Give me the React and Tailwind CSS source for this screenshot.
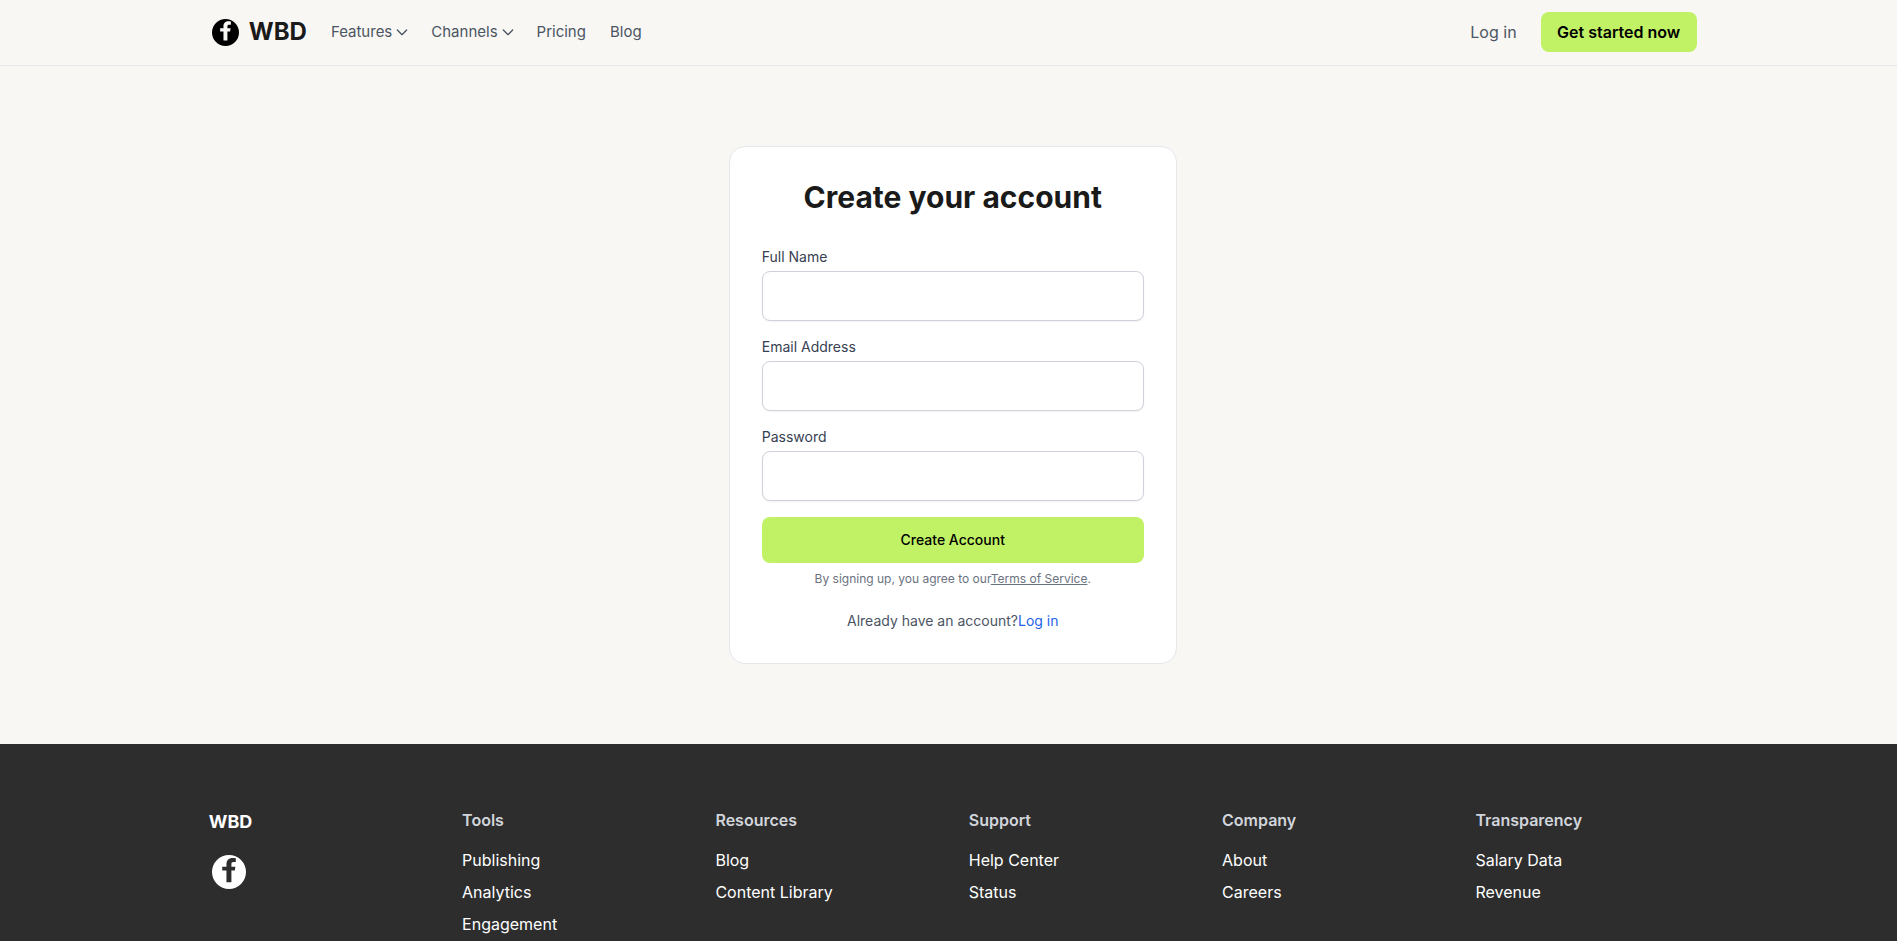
const LIME = 'bg-[#c1f266]';

// round mark with the f cut out, so the page colour shows through it
function FacebookIcon({ className }) {
  return (
    <svg viewBox="0 0 24 24" fill="currentColor" fillRule="evenodd" className={className}>
      <path d="M12 0a12 12 0 1 0 0 24a12 12 0 1 0 0-24Z M10.2 19.2V11H7.2V8.3H10.2V6.6C10.2 3.5 12 2.1 14.5 2.1C15.4 2.1 16.2 2.2 16.8 2.3V5H15.2C14.1 5 13.7 5.5 13.7 6.6V8.3H16.5L16.1 11H13.7V19.2Z" />
    </svg>
  );
}

function Chevron() {
  return (
    <svg viewBox="0 0 24 24" fill="none" stroke="currentColor" strokeWidth="2" strokeLinecap="round" strokeLinejoin="round" className="w-4 h-4 ml-[2px] -mr-[3px]">
      <path d="M19 9l-7 7-7-7" />
    </svg>
  );
}

const footerColumns = [
  { title: 'Tools', links: ['Publishing', 'Analytics', 'Engagement'] },
  { title: 'Resources', links: ['Blog', 'Content Library'] },
  { title: 'Support', links: ['Help Center', 'Status'] },
  { title: 'Company', links: ['About', 'Careers'] },
  { title: 'Transparency', links: ['Salary Data', 'Revenue'] },
];

function Field({ label, type = 'text' }) {
  return (
    <div className="mb-4">
      <label className="block mb-1 text-sm text-[#374151]">{label}</label>
      <input type={type} className="block w-full h-[50px] bg-white border border-[#cfd1da] rounded-lg shadow-xs" />
    </div>
  );
}

export default function App() {
  return (
    <div className="h-screen overflow-hidden">
      <div className="w-[1905.5px] bg-[#f8f7f4] text-[#1a1a1a] font-['Inter',sans-serif]">
        {/* Nav */}
        <header className="border-b border-[#e5e7eb]">
          <div className="max-w-[1536px] mx-auto px-6 pt-3 pb-[13px] flex items-center justify-between">
            <div className="flex items-center">
              <a className="flex items-center gap-[10px] pl-[3px]">
                <FacebookIcon className="w-[27px] h-[27px] text-black" />
                <span className="text-2xl font-bold">WBD</span>
              </a>
              <nav className="flex items-center gap-6 ml-6 text-[15px] text-[#4b5563]">
                <a className="flex items-center">Features<Chevron /></a>
                <a className="flex items-center">Channels<Chevron /></a>
                <a>Pricing</a>
                <a>Blog</a>
              </nav>
            </div>
            <div className="flex items-center gap-6">
              <a className="text-base text-[#4b5563]">Log in</a>
              <a className={`${LIME} h-10 px-[16.5px] flex items-center rounded-lg text-base font-semibold text-black`}>Get started now</a>
            </div>
          </div>
        </header>

        {/* Sign up card */}
        <main className="py-20">
          <div className="w-[448px] mx-auto bg-white border border-[#e5e7eb] rounded-2xl p-8">
            <h1 className="mb-8 text-3xl font-bold text-center">Create your account</h1>
            <Field label="Full Name" />
            <Field label="Email Address" type="email" />
            <Field label="Password" type="password" />
            <button className={`${LIME} w-full h-[46px] rounded-lg text-sm font-medium text-black`}>Create Account</button>
            <p className="mt-2 text-xs text-center text-[#6b7280]">
              By signing up, you agree to our<a className="underline">Terms of Service</a>.
            </p>
            <p className="mt-6 text-sm text-center text-[#4b5563]">
              Already have an account?<a className="text-[#2563eb]">Log in</a>
            </p>
          </div>
        </main>

        {/* Footer */}
        <footer className="bg-[#2d2d2d] py-16">
          <div className="max-w-[1536px] mx-auto px-6 grid grid-cols-6 gap-8">
            <div>
              <div className="text-lg font-bold text-white">WBD</div>
              <a className="mt-4 w-10 h-10 p-[3px] block text-white">
                <FacebookIcon className="w-[34px] h-[34px]" />
              </a>
            </div>
            {footerColumns.map((col) => (
              <div key={col.title}>
                <h3 className="mb-4 text-base font-semibold text-[#d1d5db]">{col.title}</h3>
                <ul className="flex flex-col gap-2">
                  {col.links.map((link) => (
                    <li key={link} className="text-base text-white">{link}</li>
                  ))}
                </ul>
              </div>
            ))}
          </div>
        </footer>
      </div>
    </div>
  );
}
